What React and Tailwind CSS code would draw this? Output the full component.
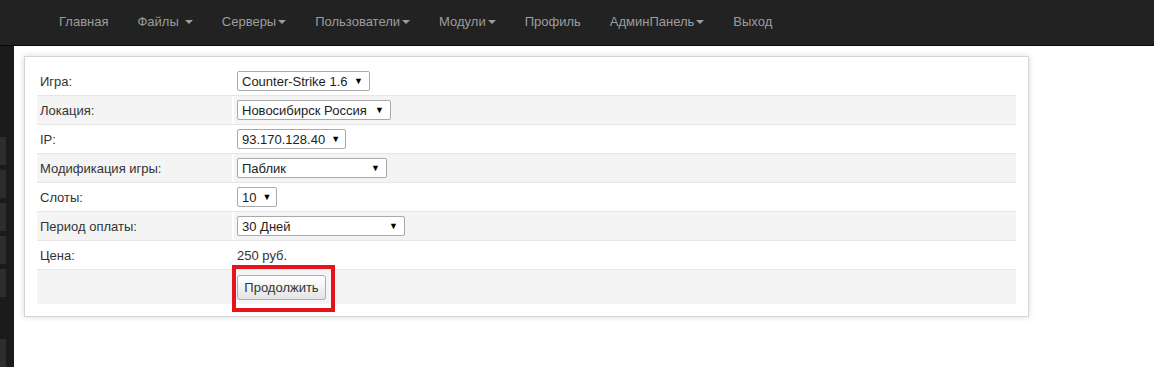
import React from 'react';

const navItems = [
  { label: 'Главная' },
  { label: 'Файлы', caret: true, space: true },
  { label: 'Серверы', caret: true },
  { label: 'Пользователи', caret: true },
  { label: 'Модули', caret: true },
  { label: 'Профиль' },
  { label: 'АдминПанель', caret: true },
  { label: 'Выход' },
];

const rows = [
  { label: 'Игра:', select: 'Counter-Strike 1.6', w: 'w-[133px]' },
  { label: 'Локация:', select: 'Новосибирск Россия', w: 'w-[154px]' },
  { label: 'IP:', select: '93.170.128.40', w: 'w-[109px]' },
  { label: 'Модификация игры:', select: 'Паблик', w: 'w-[150px]' },
  { label: 'Слоты:', select: '10', w: 'w-[40px]' },
  { label: 'Период оплаты:', select: '30 Дней', w: 'w-[168px]' },
  { label: 'Цена:', text: '250 руб.' },
];

function FakeSelect({ value, w }) {
  return (
    <div className={`${w} h-[20px] flex items-center justify-between pl-[4px] pr-[6px] bg-white border border-[#a9a9a9] rounded-[2px] text-[13px] text-[#222] leading-none whitespace-nowrap overflow-hidden`}>
      <span>{value}</span>
      <span className="text-[9px] text-black ml-[6px]">▼</span>
    </div>
  );
}

function Caret() {
  return <span className="inline-block ml-[2px] align-middle w-0 h-0 border-x-[4px] border-x-transparent border-t-[4px] border-t-[#9d9d9d]"></span>;
}

export default function App() {
  return (
    <div className="w-[1154px] h-[367px] bg-white overflow-hidden font-['Liberation_Sans',Arial,sans-serif]">
      {/* Навбар */}
      <nav className="h-[46px] bg-[#222] border-b border-[#080808] flex items-center pl-[44.5px] pb-[2px]">
        {navItems.map((item) => (
          <span key={item.label} className="px-[14.5px] text-[13px] text-[#9d9d9d] whitespace-nowrap">
            {item.label}
            {item.caret && (item.space ? <span className="ml-[4px]"><Caret /></span> : <Caret />)}
          </span>
        ))}
      </nav>

      <div className="flex h-[321px]">
        {/* Боковая полоса */}
        <div className="w-[14px] bg-[#1b1b1b] flex flex-col pt-[91px] gap-[5px] shrink-0">
          {[0, 1, 2, 3, 4].map((i) => (
            <div key={i} className="w-[6px] h-[30px] bg-[#2d2d2d]"></div>
          ))}
          <div className="w-[6px] h-[30px] bg-[#2d2d2d] mt-[37px]"></div>
        </div>

        {/* Панель */}
        <div className="pl-[10px] pt-[10px]">
          <div className="w-[1005px] bg-white border border-[#d4d4d4] shadow-[0_0_6px_rgba(0,0,0,0.15)] px-[12px] pt-[9px] pb-[12px]">
            <div className="w-[979px] text-[13px] text-[#333]">
              {rows.map((r, i) => (
                <div
                  key={r.label}
                  className={`flex h-[29px] ${i > 0 ? 'border-t border-[#e6e6e6]' : 'pt-[1px]'}`}
                >
                  <div className={`w-[195px] flex items-center pl-[3px] pt-[1px] ${i % 2 === 1 ? 'bg-[#f4f4f4]' : ''}`}>{r.label}</div>
                  <div className={`flex-1 flex items-center pl-[3px] border-l-2 border-white ${i % 2 === 1 ? 'bg-[#f4f4f4]' : ''}`}>
                    {r.select ? <FakeSelect value={r.select} w={r.w} /> : <span className="pt-[1px]">{r.text}</span>}
                  </div>
                </div>
              ))}
              <div className="flex h-[35px] border-t border-[#e6e6e6]">
                <div className="w-[195px] bg-[#f4f4f4]"></div>
                <div className="flex-1 flex items-center pl-[3px] border-l-2 border-white bg-[#f4f4f4]">
                  <div className="relative">
                    <button className="h-[25px] w-[89px] rounded-[3px] border border-[#adadad] bg-gradient-to-b from-white to-[#e4e4e4] text-[13px] text-[#333] leading-none">
                      Продолжить
                    </button>
                    <div className="absolute left-[-5px] top-[-10px] w-[103px] h-[47px] border-4 border-[#e3141c] pointer-events-none"></div>
                  </div>
                </div>
              </div>
            </div>
          </div>
        </div>
      </div>
    </div>
  );
}
